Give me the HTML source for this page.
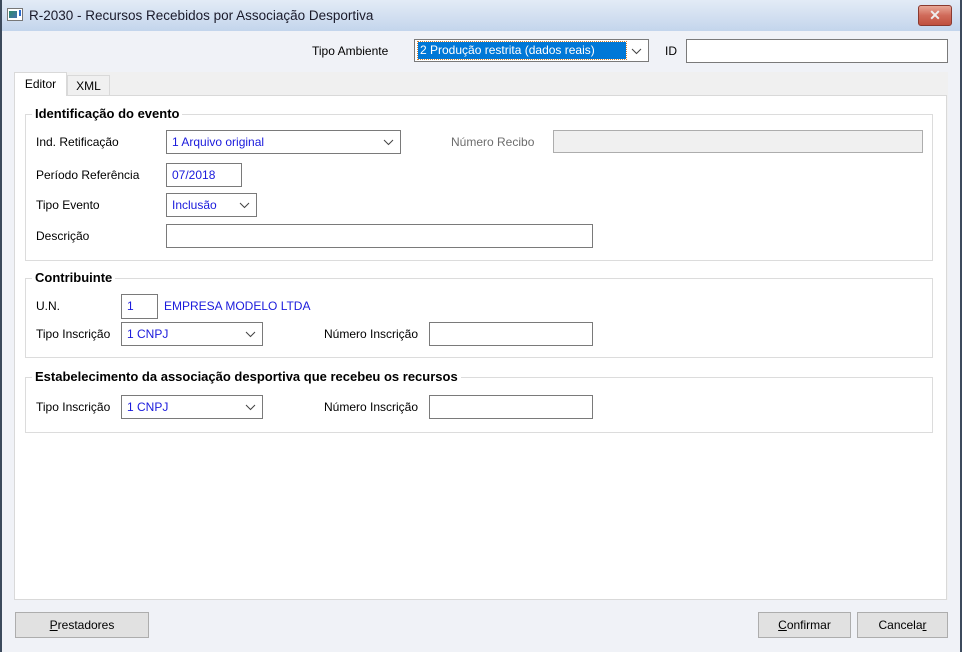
<!DOCTYPE html>
<html><head><meta charset="utf-8"><style>
*{box-sizing:border-box;margin:0;padding:0}
body{width:962px;height:652px;overflow:hidden;background:#f0f2f7;font-family:"Liberation Sans",sans-serif;font-size:12px;color:#000;position:relative}
.a{position:absolute;white-space:nowrap}
.title{left:0;top:0;width:962px;height:31px;background:linear-gradient(#e3ebf6,#c3d5ec);}
.edge{top:0;width:2px;height:652px;background:#3c4a5c}
.inp{position:absolute;background:#fff;border:1px solid #7a7a7a;color:#1a1adc;padding-left:5px;line-height:22px;font-size:12px}
.cb{position:absolute;background:#fff;border:1px solid #7a7a7a;color:#1a1adc;padding-left:5px;line-height:22px;font-size:12px}
.cb svg{position:absolute;right:6px;top:8px}
.grp{position:absolute;border:1px solid #dcdcdc}
.gt{position:absolute;background:#fff;font-weight:bold;font-size:13px;padding:0 3px;top:-9px;left:6px;line-height:16px}
.lbl{position:absolute;white-space:nowrap;line-height:14px}
.btn{position:absolute;background:#e1e1e1;border:1px solid #adadad;text-align:center;line-height:24px;font-size:12px}
</style></head><body>
<div class="a title"></div>
<div class="a edge" style="left:0"></div>
<div class="a edge" style="left:960px"></div>
<div class="a" style="left:7px;top:8px;width:16px;height:13px;border:1px solid #777;background:#fff"><div style="position:absolute;left:1px;top:2px;width:8px;height:7px;background:linear-gradient(135deg,#2a8a6a,#4670b0)"></div><div style="position:absolute;left:11px;top:1px;width:2px;height:6px;background:#2a6ad0"></div></div>
<div class="a" style="left:29px;top:8px;font-size:13.5px;color:#1a1a2a">R-2030 - Recursos Recebidos por Associação Desportiva</div>
<div class="a" style="left:918px;top:5px;width:34px;height:21px;border:1px solid #8a3a30;border-radius:3px;background:linear-gradient(#e8a898,#d06a5a 50%,#c0503e);color:#eee;font-weight:bold;font-size:14px;text-align:center;line-height:19px">✕</div>

<div class="lbl" style="left:312px;top:44px">Tipo Ambiente</div>
<div class="cb" style="left:414px;top:39px;width:235px;height:23px;padding:0"><div style="position:absolute;left:3px;top:2px;width:208px;height:17px;background:#0078d7;color:#fff;line-height:17px;padding-left:2px;outline:1px dotted #d08030">2 Produção restrita (dados reais)</div><svg width="11" height="7"><path d="M1 1l4.5 4.5L10 1" stroke="#444" fill="none"/></svg></div>
<div class="lbl" style="left:665px;top:44px">ID</div>
<div class="inp" style="left:686px;top:39px;width:262px;height:24px"></div>

<div class="a" style="left:14px;top:72px;width:934px;height:528px;background:#f0f0f0"></div>
<div class="a" style="left:14px;top:95px;width:933px;height:505px;background:#fff;border:1px solid #d9d9d9"></div>
<div class="a" style="left:67px;top:75px;width:43px;height:21px;background:#f0f0f0;border:1px solid #d9d9d9;text-align:center;line-height:20px">XML</div>
<div class="a" style="left:14px;top:72px;width:53px;height:24px;background:#fff;border:1px solid #d9d9d9;border-bottom:none;text-align:center;line-height:22px">Editor</div>

<div class="grp" style="left:25px;top:114px;width:908px;height:147px"><div class="gt">Identificação do evento</div></div>
<div class="lbl" style="left:36px;top:135px">Ind. Retificação</div>
<div class="cb" style="left:166px;top:130px;width:235px;height:24px">1 Arquivo original<svg width="11" height="7"><path d="M1 1l4.5 4.5L10 1" stroke="#444" fill="none"/></svg></div>
<div class="lbl" style="left:451px;top:135px;color:#6d6d6d">Número Recibo</div>
<div class="inp" style="left:553px;top:130px;width:370px;height:23px;background:#f0f0f0;border-color:#adadad"></div>
<div class="lbl" style="left:36px;top:168px">Período Referência</div>
<div class="inp" style="left:166px;top:163px;width:76px;height:24px">07/2018</div>
<div class="lbl" style="left:36px;top:198px">Tipo Evento</div>
<div class="cb" style="left:166px;top:193px;width:91px;height:24px">Inclusão<svg width="11" height="7"><path d="M1 1l4.5 4.5L10 1" stroke="#444" fill="none"/></svg></div>
<div class="lbl" style="left:36px;top:229px">Descrição</div>
<div class="inp" style="left:166px;top:224px;width:427px;height:24px"></div>

<div class="grp" style="left:25px;top:278px;width:908px;height:80px"><div class="gt">Contribuinte</div></div>
<div class="lbl" style="left:36px;top:299px">U.N.</div>
<div class="inp" style="left:121px;top:294px;width:37px;height:25px">1</div>
<div class="lbl" style="left:164px;top:299px;color:#1a1adc">EMPRESA MODELO LTDA</div>
<div class="lbl" style="left:36px;top:327px">Tipo Inscrição</div>
<div class="cb" style="left:121px;top:322px;width:142px;height:24px">1 CNPJ<svg width="11" height="7"><path d="M1 1l4.5 4.5L10 1" stroke="#444" fill="none"/></svg></div>
<div class="lbl" style="left:324px;top:327px">Número Inscrição</div>
<div class="inp" style="left:429px;top:322px;width:164px;height:24px"></div>

<div class="grp" style="left:25px;top:377px;width:908px;height:56px"><div class="gt">Estabelecimento da associação desportiva que recebeu os recursos</div></div>
<div class="lbl" style="left:36px;top:400px">Tipo Inscrição</div>
<div class="cb" style="left:121px;top:395px;width:142px;height:24px">1 CNPJ<svg width="11" height="7"><path d="M1 1l4.5 4.5L10 1" stroke="#444" fill="none"/></svg></div>
<div class="lbl" style="left:324px;top:400px">Número Inscrição</div>
<div class="inp" style="left:429px;top:395px;width:164px;height:24px"></div>

<div class="btn" style="left:15px;top:612px;width:134px;height:26px"><u>P</u>restadores</div>
<div class="btn" style="left:758px;top:612px;width:93px;height:26px"><u>C</u>onfirmar</div>
<div class="btn" style="left:857px;top:612px;width:91px;height:26px">Cancela<u>r</u></div>
</body></html>
